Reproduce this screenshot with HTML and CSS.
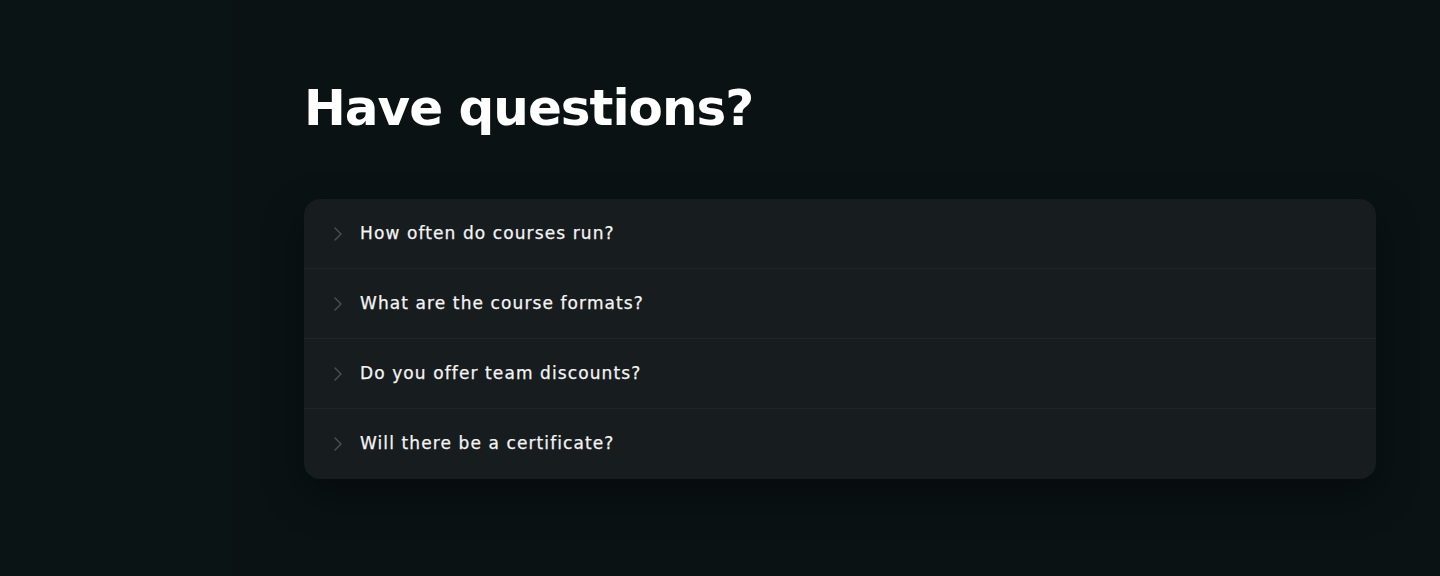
FILE: index.html
```html
<!DOCTYPE html>
<html lang="en">
<head>
<meta charset="utf-8">
<link rel="stylesheet" href="styles.css">
</head>
<body>
<div class="page">
  <div class="side"></div>
  <main class="main">
    <h1 class="title">Have questions?</h1>
    <div class="faq">
      <div class="item">
        <svg class="chev" viewBox="0 0 10 16" width="10" height="16"><path d="M2 2l6 6-6 6" fill="none" stroke="#4b5254" stroke-width="1.4" stroke-linecap="round" stroke-linejoin="round"/></svg>
        <span class="q">How often do courses run?</span>
      </div>
      <div class="item">
        <svg class="chev" viewBox="0 0 10 16" width="10" height="16"><path d="M2 2l6 6-6 6" fill="none" stroke="#4b5254" stroke-width="1.4" stroke-linecap="round" stroke-linejoin="round"/></svg>
        <span class="q">What are the course formats?</span>
      </div>
      <div class="item">
        <svg class="chev" viewBox="0 0 10 16" width="10" height="16"><path d="M2 2l6 6-6 6" fill="none" stroke="#4b5254" stroke-width="1.4" stroke-linecap="round" stroke-linejoin="round"/></svg>
        <span class="q">Do you offer team discounts?</span>
      </div>
      <div class="item">
        <svg class="chev" viewBox="0 0 10 16" width="10" height="16"><path d="M2 2l6 6-6 6" fill="none" stroke="#4b5254" stroke-width="1.4" stroke-linecap="round" stroke-linejoin="round"/></svg>
        <span class="q">Will there be a certificate?</span>
      </div>
    </div>
  </main>
</div>
</body>
</html>
```
FILE: styles.css
```css
html, body {
  margin: 0;
  padding: 0;
  background: #0a1213;
}
.page {
  display: flex;
  width: 1440px;
  height: 576px;
  overflow: hidden;
}
.side {
  width: 232px;
  flex: none;
  background: #0b1415;
}
.main {
  flex: 1;
  padding: 0 64px 0 72px;
  background: #0a1213;
}
.title {
  margin: 78px 0 0 0;
  font-family: "DejaVu Sans", sans-serif;
  font-weight: 700;
  font-size: 50px;
  line-height: 60px;
  color: #ffffff;
  letter-spacing: -1px;
}
.faq {
  margin-top: 61px;
  background: #171c1e;
  border-radius: 16px;
  box-shadow: 0 16px 40px rgba(0,0,0,0.35);
  overflow: hidden;
}
.item {
  height: 69px;
  display: flex;
  align-items: center;
  padding-left: 29px;
  border-bottom: 1px solid #1f2527;
}
.item:last-child {
  border-bottom: none;
  height: 70px;
}
.chev {
  flex: none;
  margin-right: 17px;
}
.q {
  font-family: "DejaVu Sans", sans-serif;
  font-weight: 400;
  font-size: 17px;
  letter-spacing: 1.1px;
  color: #f4f4f4;
  -webkit-text-stroke: 0.25px #f4f4f4;
  position: relative;
  top: -1px;
}
```
